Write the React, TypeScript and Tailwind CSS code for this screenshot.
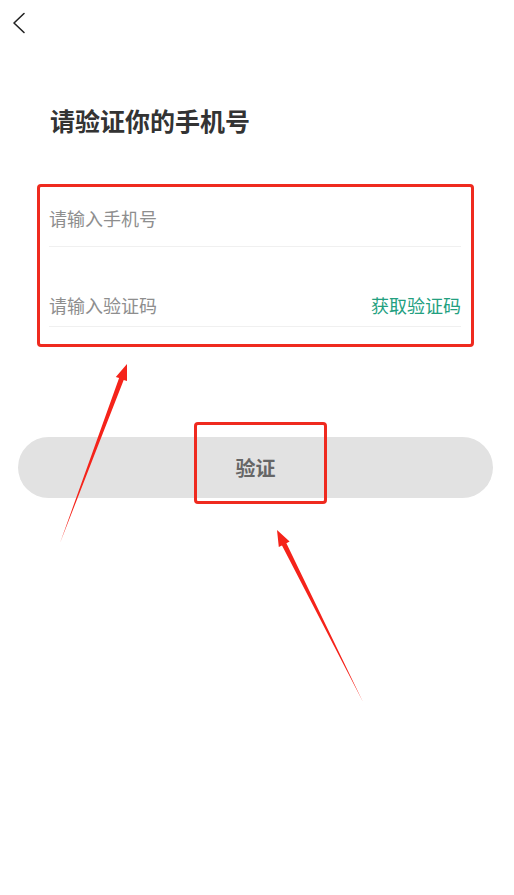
export default function App() {
  return (
    <div
      className="relative w-[514px] h-[895px] bg-white overflow-hidden"
      style={{ fontFamily: '"Noto Sans CJK SC", "Noto Sans", sans-serif' }}
    >
      {/* Header */}
      <div className="h-[45px] pl-[12px] pt-[12px]">
        <svg width="14" height="22" viewBox="0 0 14 22" fill="none">
          <path d="M12 1.5 L2 11 L12 20.5" stroke="#222" strokeWidth="1.6" strokeLinecap="round" strokeLinejoin="round" />
        </svg>
      </div>

      {/* Title */}
      <h1 className="mt-[59px] pl-[50px] text-[25px] leading-[32px] font-bold text-[#333]">请验证你的手机号</h1>

      {/* Inputs (annotated) */}
      <div className="mt-[48px] ml-[37px] w-[437px] h-[163px] border-[3px] border-[#ef2a1f] rounded-[4px] pl-[9px] pr-[10px]">
        <div className="h-[60px] pt-[19px] border-b border-[#f0f0f0]">
          <span className="text-[18px] leading-[24px] text-[#8e8e8e]">请输入手机号</span>
        </div>
        <div className="h-[80px] pt-[46px] border-b border-[#f0f0f0] flex justify-between items-start">
          <span className="text-[18px] leading-[24px] text-[#8e8e8e]">请输入验证码</span>
          <span className="text-[18px] leading-[24px] text-[#23a07f]">获取验证码</span>
        </div>
      </div>

      {/* Button */}
      <button className="mt-[90px] ml-[18px] w-[475px] h-[61px] rounded-full bg-[#e2e2e2] text-[20px] font-bold text-[#666] flex items-center justify-center">
        验证
      </button>

      {/* Annotation box over button */}
      <div className="absolute left-[194px] top-[422px] w-[133px] h-[82px] border-[3px] border-[#ef2a1f] rounded-[4px]" />

      {/* Annotation arrows */}
      <svg className="absolute left-0 top-0 pointer-events-none" width="514" height="895">
        <polygon
          points="60,543 123.7,379.9 127,381.1 127,364 115.8,376.9 119.1,378.1"
          fill="#f5231a"
        />
        <polygon
          points="363,702 286.4,543.2 289.6,541.6 277,530 278.8,547 282,545.4"
          fill="#f5231a"
        />
      </svg>
    </div>
  );
}
